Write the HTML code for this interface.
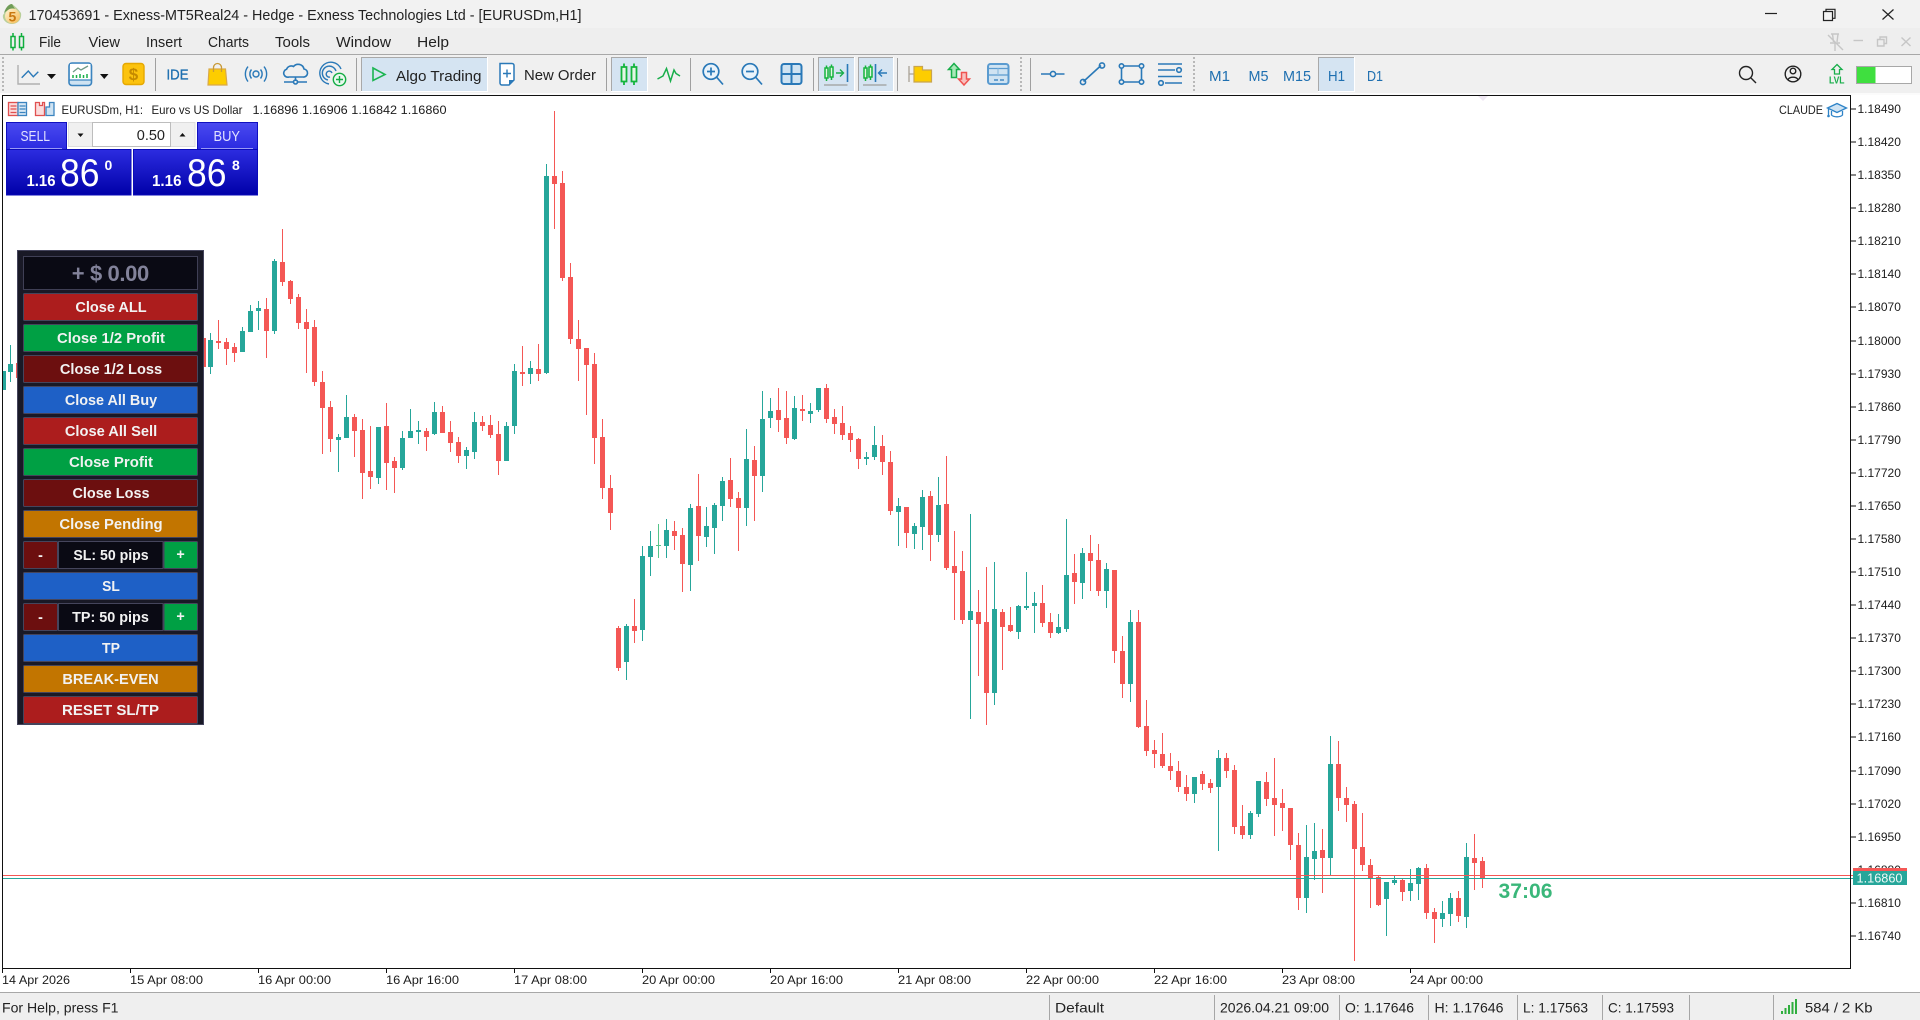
<!DOCTYPE html>
<html><head><meta charset="utf-8"><title>MT5</title>
<style>
html,body{margin:0;padding:0;background:#fff;width:1920px;height:1020px;overflow:hidden}
svg{display:block}
text{font-family:"Liberation Sans",sans-serif;fill:#1c1c1c}
.p{font-size:12px}
.t{font-size:12px}
.m{font-size:15px;fill:#222}
.s{font-size:14px;fill:#222}
.b{font-size:14.3px;font-weight:bold;fill:#f2f2f2;text-anchor:middle}
.tf{font-size:15px;fill:#1e6fb0}
.ic{fill:none;stroke:#2a79b8;stroke-width:1.6}
.T{stroke:#26a69a;fill:none}
.R{stroke:#f45755;fill:none}
</style></head><body>
<svg width="1920" height="1020" viewBox="0 0 1920 1020" xmlns="http://www.w3.org/2000/svg">
<defs>
<linearGradient id="gs" x1="0" y1="0" x2="0" y2="1"><stop offset="0" stop-color="#4a4af0"/><stop offset="1" stop-color="#2a2ae0"/></linearGradient>
<linearGradient id="gb" x1="0" y1="0" x2="0" y2="1"><stop offset="0" stop-color="#2c2ce0"/><stop offset="1" stop-color="#0000a8"/></linearGradient>
<linearGradient id="gl" x1="0" y1="0" x2="1" y2="1"><stop offset="0" stop-color="#fff6d8"/><stop offset="1" stop-color="#f4b850"/></linearGradient>
</defs>
<rect width="1920" height="1020" fill="#fff"/>
<!-- title bar -->
<rect width="1920" height="28" fill="#f2f2f2"/>
<rect y="28" width="1920" height="26" fill="#eeeeee"/>
<rect y="54" width="1920" height="1" fill="#a8a8a8"/>
<rect y="55" width="1920" height="38" fill="#f0f0f0"/>
<rect y="93" width="1920" height="2" fill="#fbfbfb"/>
<!-- logo -->
<path d="M5 12C6 7 9 4 12 4C15 6 18 9 21 13C22 19 18 24 12 24C6 24 2 19 3 15Z" fill="#b9cf9a"/>
<path d="M4 13C6 6 10 4 12 4L15 9C11 9 7 10 4 13Z" fill="#6f9c58"/>
<circle cx="12.500" cy="16" r="7.500" fill="url(#gl)"/>
<text x="8.500" y="21.500" style="font-size:14px;font-weight:bold;fill:#c9780f">5</text>
<text x="28.500" y="20" style="font-size:15px;fill:#222" textLength="553" lengthAdjust="spacingAndGlyphs">170453691 - Exness-MT5Real24 - Hedge - Exness Technologies Ltd - [EURUSDm,H1]</text>
<!-- window controls -->
<path d="M1765 13.500H1777" stroke="#222" stroke-width="1.200"/>
<path d="M1823.500 11.500h9v9h-9zM1826 11.500v-2.200h9v9h-2.400" fill="none" stroke="#222" stroke-width="1.200"/>
<path d="M1882.500 9.500L1893.500 19.500M1893.500 9.500L1882.500 19.500" stroke="#222" stroke-width="1.200"/>
<!-- menu -->
<g fill="none" stroke="#0fae3c" stroke-width="1.500"><path d="M11 36.500h4v11h-4zM13 33v3.500M13 47.500v3M19.500 36.500h4v11h-4zM21.500 33v3.500M21.500 47.500v3"/></g>
<text class="m" x="39" y="47" textLength="22" lengthAdjust="spacingAndGlyphs">File</text>
<text class="m" x="88.500" y="47" textLength="31.500" lengthAdjust="spacingAndGlyphs">View</text>
<text class="m" x="146" y="47" textLength="36" lengthAdjust="spacingAndGlyphs">Insert</text>
<text class="m" x="208" y="47" textLength="41" lengthAdjust="spacingAndGlyphs">Charts</text>
<text class="m" x="275" y="47" textLength="35" lengthAdjust="spacingAndGlyphs">Tools</text>
<text class="m" x="336" y="47" textLength="55" lengthAdjust="spacingAndGlyphs">Window</text>
<text class="m" x="417" y="47" textLength="32" lengthAdjust="spacingAndGlyphs">Help</text>
<g fill="none" stroke="#c6c6c6" stroke-width="1.400">
<path d="M1831 34h8M1832.500 34l1 8M1838 34l-1 8M1830 43h10M1835 43v8M1828 35l15 15"/>
<path d="M1853.500 40.500h9.500"/>
<path d="M1877.500 39.500h6.500v6.500h-6.500zM1880 39.500v-2.500h6.500v6.500h-2.500"/>
<path d="M1901.500 37.500l9 8.500M1910.500 37.500l-9 8.500"/>
</g>
<!-- toolbar grippers & seps -->
<g fill="#b8b8b8"><path d="M2 57h2v2h-2zM2 61h2v2h-2zM2 65h2v2h-2zM2 69h2v2h-2zM2 73h2v2h-2zM2 77h2v2h-2zM2 81h2v2h-2zM2 85h2v2h-2zM2 89h2v2h-2z"/>
<path d="M1020 57h2v2h-2zM1020 61h2v2h-2zM1020 65h2v2h-2zM1020 69h2v2h-2zM1020 73h2v2h-2zM1020 77h2v2h-2zM1020 81h2v2h-2zM1020 85h2v2h-2zM1020 89h2v2h-2z"/>
<path d="M1193 57h2v2h-2zM1193 61h2v2h-2zM1193 65h2v2h-2zM1193 69h2v2h-2zM1193 73h2v2h-2zM1193 77h2v2h-2zM1193 81h2v2h-2zM1193 85h2v2h-2zM1193 89h2v2h-2z"/></g>
<g fill="#a0a0a0"><rect x="155" y="58" width="1" height="33"/><rect x="356" y="58" width="1" height="33"/><rect x="606" y="58" width="1" height="33"/><rect x="690" y="58" width="1" height="33"/><rect x="813" y="58" width="1" height="33"/><rect x="897" y="58" width="1" height="33"/><rect x="1030" y="58" width="1" height="33"/></g>
<!-- toggled buttons -->
<g fill="#d5e4f2"><rect x="361" y="57" width="126" height="34"/><rect x="611" y="57" width="36" height="34"/><rect x="818" y="57" width="36" height="34"/><rect x="858" y="57" width="35" height="34"/><rect x="1318" y="57" width="36" height="34"/></g>
<g fill="none" stroke="#a9a9a9"><path d="M361.500 91V57.500H487M611.500 91V57.500H647M818.500 91V57.500H854M858.500 91V57.500H893M1318.500 91V57.500H1354"/></g>
<g fill="none" stroke="#fff"><path d="M361 91.500H487.500V57M611 91.500H647.500V57M818 91.500H854.500V57M858 91.500H893.500V57M1318 91.500H1354.500V57"/></g>
<!-- icon 1 -->
<path d="M18 65V84H40" fill="none" stroke="#b0b0b0" stroke-width="1.400"/>
<path d="M21.700 77.700L28.300 71L33.300 76.700L38.300 71.700" class="ic" style="stroke-width:1.400"/>
<path d="M47 74h9l-4.500 5z" fill="#111"/>
<!-- icon 2 -->
<rect x="69" y="63" width="22.500" height="22.500" rx="3" fill="#cfe3f2" stroke="#3b84bf" stroke-width="1.600"/>
<rect x="70" y="64" width="20.500" height="15.500" fill="#fff"/>
<path d="M69 80h22.500" stroke="#3b84bf" stroke-width="1.300"/>
<path d="M73 72L78 68L81 70L88 66" fill="none" stroke="#6f9a86" stroke-width="1.300"/>
<path d="M73 78v-3M76.500 78v-3M80 78v-4M83.500 78v-3M87 78v-4" stroke="#19ae48" stroke-width="1.500"/>
<path d="M100 74h8.500l-4.250 5z" fill="#111"/>
<!-- dollar -->
<rect x="123" y="63.500" width="21" height="21" rx="3" fill="#fcc30e" stroke="#e6a800" stroke-width="1.400"/>
<text x="133.500" y="80" style="font-size:17px;font-weight:bold;fill:#c58a00;text-anchor:middle">$</text>
<text class="tf" x="166.500" y="79.500" style="font-size:15px;stroke:#1e6fb0;stroke-width:.35" textLength="22" lengthAdjust="spacingAndGlyphs">IDE</text>
<!-- bag -->
<path d="M209 69h16.500l1.500 16h-19z" fill="#fdcd00" stroke="#d9a94a" stroke-width="1.200"/>
<path d="M213.500 72v-4.500a4 4 0 0 1 8 0V72" fill="none" stroke="#c89a38" stroke-width="1.300"/>
<!-- signal -->
<g class="ic" style="stroke-width:1.400"><circle cx="256" cy="74" r="3"/><path d="M251.500 69.500a7 7 0 0 0 0 9M260.500 69.500a7 7 0 0 1 0 9M248 66.500a12 12 0 0 0 0 15M264 66.500a12 12 0 0 1 0 15"/></g>
<!-- cloud -->
<path d="M289 77h14a4 4 0 0 0 1-8 6 6 0 0 0-10.500-2.500 5 5 0 0 0-7 2.800A4 4 0 0 0 289 77Z" class="ic" fill="#eaf3fa"/>
<path d="M295.500 77v4M284 82h9M298 82h9" class="ic"/><circle cx="295.500" cy="82" r="2" class="ic"/>
<!-- globe plus -->
<g class="ic" style="stroke-width:1.400"><path d="M341 69a11 11 0 1 0-12 15M336 71a7 7 0 1 0-8 9M332 73a3 3 0 1 0-2 4"/></g>
<circle cx="339.500" cy="79.500" r="6.200" fill="#e9f8ee" stroke="#15ad45" stroke-width="1.400"/>
<path d="M339.500 76v7M336 79.500h7" stroke="#15ad45" stroke-width="1.400"/>
<!-- algo -->
<path d="M373 68L385 74.500L373 80.500Z" fill="none" stroke="#1cb552" stroke-width="1.600"/>
<text x="396" y="81" style="font-size:15px;fill:#222" textLength="85.500" lengthAdjust="spacingAndGlyphs">Algo Trading</text>
<!-- new order -->
<path d="M500 63.500h12a2 2 0 0 1 2 2V80l-5 5h-7a2 2 0 0 1-2-2z" fill="#fff" stroke="#2a79b8" stroke-width="1.500"/>
<path d="M509 85l5-5h-5z" fill="#2a79b8"/>
<path d="M507 69.500v8M503 73.500h8" stroke="#2a79b8" stroke-width="1.400"/>
<text x="524" y="80" style="font-size:15px;fill:#222" textLength="72" lengthAdjust="spacingAndGlyphs">New Order</text>
<!-- candles icon -->
<g fill="#e4f6e4" stroke="#14b43c" stroke-width="1.800"><path d="M621.500 67h5v14.500h-5zM631.500 67h5v14.500h-5z"/><path d="M624 63.500V67M624 81.500v3.500M634 63.500V67M634 81.500v3.500" fill="none"/></g>
<!-- zigzag -->
<path d="M657.500 79L663 76L666.500 68.500L670.500 81L674 70L676 73.500L680 76" fill="none" stroke="#18ae4a" stroke-width="1.500"/>
<!-- zoom -->
<g class="ic" style="stroke-width:1.700"><circle cx="711" cy="71.500" r="7.800" fill="#eaf3fa"/><path d="M716.500 77L723 84.500M707 71.500h8M711 67.500v8"/>
<circle cx="750" cy="71.500" r="7.800" fill="#eaf3fa"/><path d="M755.500 77L762 84.500M746 71.500h8"/></g>
<g stroke="#2a79b8" stroke-width="2"><rect x="781.500" y="64" width="20" height="20" rx="2.500" fill="#cfe3f2"/><path d="M791.500 64v20M781.500 74h20" fill="none"/></g>
<!-- shift buttons -->
<g fill="#e4f6e4" stroke="#14b43c" stroke-width="1.500"><path d="M825 68h3v10h-3zM830 67h3v10h-3z"/><path d="M826.500 65.500V68M826.500 78v3M831.500 64.500V67M831.500 77v3" fill="none"/></g>
<path d="M836 73h7.500M840 69.500l3.500 3.500-3.500 3.500" fill="none" stroke="#18ae4a" stroke-width="1.400"/>
<path d="M847.500 64v18" stroke="#2a79b8" stroke-width="1.600"/>
<path d="M824 85h23.500" stroke="#9d9d9d" stroke-width="1.300"/>
<g fill="#e4f6e4" stroke="#14b43c" stroke-width="1.500"><path d="M864 68h3v10h-3zM869 67h3v10h-3z"/><path d="M865.500 65.500V68M865.500 78v3M870.500 64.500V67M870.500 77v3" fill="none"/></g>
<path d="M875.500 64v18" stroke="#2a79b8" stroke-width="1.600"/>
<path d="M887 73h-8M882 69.500l-3.500 3.500 3.500 3.500" fill="none" stroke="#2a79b8" stroke-width="1.400"/>
<path d="M863 85h23.500" stroke="#9d9d9d" stroke-width="1.300"/>
<!-- folder -->
<path d="M909 66v16M909 74h5" stroke="#aaa296" stroke-width="1.300" fill="none"/>
<path d="M914 66.500h8.500v3.500h9v12H914z" fill="#fdcd00" stroke="#c9a54d" stroke-width="1.200"/>
<!-- arrows -->
<path d="M954 63.500l5.500 6h-3v8h-5v-8h-3z" fill="#a9e8b8" stroke="#18ae4a" stroke-width="1.500"/>
<path d="M964 85l5.500-6h-3v-6.500h-5V79h-3z" fill="#f8c0be" stroke="#ef5350" stroke-width="1.500"/>
<!-- window icon -->
<rect x="988" y="64" width="20.500" height="20" rx="2.500" fill="#cfe3f2" stroke="#5a9bd0" stroke-width="2"/>
<path d="M988 68.500h20.500M988 75h20.500" stroke="#5a9bd0" stroke-width="1.300"/><path d="M998 68.500V75" stroke="#8fbde0" stroke-width="1.200"/>
<path d="M994 80h4M1000 80h4" stroke="#2a79b8" stroke-width="1.200"/>
<!-- tools -->
<g class="ic"><path d="M1041 74h9M1056 74h8.500"/><circle cx="1053" cy="74" r="2.600"/>
<path d="M1083.500 81.500L1101 65.500"/><circle cx="1083" cy="82" r="2.600"/><circle cx="1102" cy="65.500" r="2.600"/>
<path d="M1123 66h16M1141.500 68v12M1123 82h16M1121.500 68v12"/><circle cx="1121.500" cy="66" r="2.200"/><circle cx="1141.500" cy="66" r="2.200"/><circle cx="1121.500" cy="82" r="2.200"/><circle cx="1141.500" cy="82" r="2.200"/>
<path d="M1158 64h24M1158 70h17M1165 83h17M1158 76.500h24" style="stroke-width:1.400"/><circle cx="1179" cy="70" r="2.300"/><circle cx="1161" cy="83" r="2.300"/></g>
<text class="tf" x="1209" y="81" textLength="21" lengthAdjust="spacingAndGlyphs">M1</text>
<text class="tf" x="1248.500" y="81" textLength="20" lengthAdjust="spacingAndGlyphs">M5</text>
<text class="tf" x="1283" y="81" textLength="28" lengthAdjust="spacingAndGlyphs">M15</text>
<text class="tf" x="1328" y="81" textLength="17" lengthAdjust="spacingAndGlyphs">H1</text>
<text class="tf" x="1367" y="81" textLength="16" lengthAdjust="spacingAndGlyphs">D1</text>
<!-- search account lvl -->
<circle cx="1746" cy="73" r="6.500" fill="none" stroke="#222" stroke-width="1.400"/><path d="M1751 78L1756 83" stroke="#222" stroke-width="1.400"/>
<circle cx="1793" cy="74" r="7.800" fill="none" stroke="#222" stroke-width="1.400"/><circle cx="1793" cy="71" r="2.800" fill="none" stroke="#222" stroke-width="1.400"/><path d="M1788 79.500a5.500 4 0 0 1 10 0" fill="none" stroke="#222" stroke-width="1.400"/>
<path d="M1837 64.500l5 5h-2.500v4.500h-5v-4.500H1832z" fill="none" stroke="#18ae4a" stroke-width="1.300"/>
<text x="1829" y="83.500" style="font-size:10.500px;font-weight:bold;fill:#18ae4a" textLength="15.500" lengthAdjust="spacingAndGlyphs">LVL</text>
<rect x="1856.500" y="66.500" width="55" height="17" fill="#fff" stroke="#a8a8a8"/><rect x="1857" y="67" width="18.500" height="16" fill="#3fdf3f"/>
<!-- candles -->
<g shape-rendering="crispEdges">
<g transform="translate(0 100) scale(1 .33333)">
<path class="T" stroke-width="1" d="M210.500 699V822M242.500 681V756M250.500 615V696M258.500 603V690M274.500 477V702M338.500 1002V1116M346.500 885V1014M378.500 981V1152M402.500 993V1110M410.500 927V1014M418.500 963V1032M434.500 906V1005M466.500 1041V1107M474.500 936V1077M506.500 966V1083M514.500 792V1002M530.500 783V852M546.500 192V822"/>
<path class="T" stroke-width="5" d="M210.500 720V801M242.500 693V756M250.500 633V696M258.500 624V633M274.500 483V693M338.500 1011V1020M346.500 951V1014M378.500 981V1134M402.500 1014V1104M410.500 993V1014M418.500 990V996M434.500 936V1002M466.500 1050V1068M474.500 966V1056M506.500 978V1083M514.500 813V978M530.500 804V822M546.500 228V819"/>
<path class="R" stroke-width="1" d="M218.500 660V747M226.500 714V795M234.500 729V786M266.500 594V774M282.500 387V558M290.500 540V612M298.500 582V687M306.500 627V819M314.500 660V858M322.500 813V1062M330.500 903V1056M354.500 942V1071M362.500 957V1197M370.500 978V1167M386.500 909V1170M394.500 1071V1179M426.500 984V1053M442.500 918V999M450.500 963V1056M458.500 1011V1089M482.500 948V993M490.500 945V1014M498.500 963V1125M522.500 738V858M538.500 732V843M554.500 33V387M562.500 213V543M570.500 489V732M578.500 660V843M586.500 744V945M594.500 759V1092"/>
<path class="R" stroke-width="5" d="M218.500 723V729M226.500 726V747M234.500 741V759M266.500 627V693M282.500 486V546M290.500 543V597M298.500 591V669M306.500 666V687M314.500 681V846M322.500 846V924M330.500 921V1017M354.500 951V993M362.500 990V1119M370.500 1113V1131M386.500 978V1089M394.500 1083V1104M426.500 993V1011M442.500 936V999M450.500 996V1029M458.500 1026V1068M482.500 966V978M490.500 975V1005M498.500 1002V1083M522.500 816V822M538.500 807V822M554.500 228V252M562.500 249V534M570.500 531V717M578.500 717V747M586.500 744V795M594.500 792V1014"/>
</g>
<g transform="translate(0 370) scale(1 .33333)">
<path class="T" stroke-width="1" d="M626.500 762V930M642.500 528V813M650.500 483V618M666.500 447V564M690.500 402V663M706.500 411V531M714.500 399V552M722.500 321V453M746.500 177V468M762.500 63V366M770.500 84V174M794.500 78V210M810.500 99V159M818.500 54V126M866.500 246V285M874.500 168V270M898.500 384V528M914.500 459V537M922.500 360V540M938.500 321V516M970.500 432V1047M994.500 576V1005"/>
<path class="T" stroke-width="5" d="M626.500 768V876M642.500 558V780M650.500 528V561M666.500 480V528M690.500 414V585M706.500 468V501M714.500 405V474M722.500 333V408M746.500 267V414M762.500 147V318M770.500 123V144M794.500 114V207M810.500 123V132M818.500 54V120M866.500 261V267M874.500 225V261M898.500 408V426M914.500 468V492M922.500 381V471M938.500 405V495M970.500 723V750M994.500 717V969"/>
<path class="R" stroke-width="1" d="M602.500 147V387M610.500 315V480M618.500 768V903M634.500 687V819M674.500 453V540M682.500 474V666M698.500 312V573M730.500 264V411M738.500 366V543M754.500 228V453M778.500 54V186M786.500 63V222M802.500 75V153M826.500 42V159M834.500 117V192M842.500 108V210M850.500 168V246M858.500 204V297M882.500 195V315M890.500 243V435M906.500 411V534M930.500 363V573M946.500 258V600M954.500 483V750M962.500 543V762M978.500 660V918M986.500 591V1065"/>
<path class="R" stroke-width="5" d="M602.500 201V354M610.500 354V429M618.500 774V894M634.500 768V783M674.500 483V498M682.500 495V582M698.500 408V498M730.500 330V387M738.500 384V414M754.500 270V318M778.500 120V150M786.500 144V204M802.500 117V123M826.500 54V147M834.500 141V162M842.500 159V195M850.500 189V210M858.500 207V267M882.500 228V276M890.500 276V423M906.500 411V489M930.500 378V495M946.500 402V594M954.500 588V609M962.500 603V750M978.500 726V762M986.500 756V969"/>
<path d="M658.500 462V564" stroke="#54c48a" stroke-width="1" fill="none"/><path d="M656 526H661" stroke="#54c48a" stroke-width="3" fill="none"/>
</g>
<g transform="translate(0 500) scale(1 .33333)">
<path class="R" stroke-width="1" d="M1002.500 327V510M1010.500 321V396M1042.500 255V381M1050.500 339V414M1074.500 162V312M1090.500 105V273M1098.500 132V288M1114.500 210V489M1122.500 408V594M1138.500 330V684M1146.500 600V768M1154.500 720V804M1162.500 699V804M1170.500 759V840M1178.500 783V876M1186.500 825V903M1202.500 813V870M1210.500 837V879M1226.500 759V834M1234.500 795V1002M1242.500 915V1017M1266.500 816V918M1274.500 774V1008M1282.500 867V993M1290.500 924V1080M1298.500 999V1230M1322.500 987V1179M1338.500 723V933M1346.500 861V966M1354.500 903V1383M1362.500 939V1113M1370.500 1077V1224M1378.500 1128V1218M1402.500 1137V1203M1426.500 1092V1257M1434.500 1224V1329M1458.500 1173V1266M1474.500 1002V1170M1482.500 1071V1164"/>
<path class="R" stroke-width="5" d="M1002.500 336V381M1010.500 375V393M1042.500 309V369M1050.500 366V399M1074.500 219V246M1090.500 159V183M1098.500 180V273M1114.500 210V453M1122.500 453V552M1138.500 366V681M1146.500 678V753M1154.500 750V762M1162.500 762V798M1170.500 798V813M1178.500 813V861M1186.500 861V882M1202.500 822V852M1210.500 849V864M1226.500 774V813M1234.500 810V981M1242.500 978V1005M1266.500 846V897M1274.500 894V915M1282.500 909V924M1290.500 924V1035M1298.500 1035V1194M1322.500 1050V1074M1338.500 792V894M1346.500 894V915M1354.500 912V1047M1362.500 1041V1095M1370.500 1095V1134M1378.500 1131V1215M1402.500 1140V1176M1426.500 1104V1239M1434.500 1236V1257M1458.500 1194V1248M1474.500 1074V1089M1482.500 1083V1137"/>
<path class="T" stroke-width="1" d="M1018.500 315V417M1026.500 216V330M1034.500 276V399M1058.500 342V402M1066.500 57V396M1082.500 144V297M1106.500 189V324M1130.500 330V606M1194.500 831V909M1218.500 750V1053M1250.500 933V1017M1258.500 843V951M1306.500 975V1239M1314.500 969V1140M1330.500 708V1126M1386.500 1146V1308M1394.500 1128V1155M1410.500 1107V1203M1418.500 1101V1200M1442.500 1203V1281M1450.500 1179V1278M1466.500 1029V1284"/>
<path class="T" stroke-width="5" d="M1018.500 318V396M1026.500 318V324M1034.500 309V318M1058.500 381V399M1066.500 225V387M1082.500 159V249M1106.500 207V273M1130.500 366V552M1194.500 831V882M1218.500 774V861M1250.500 939V1005M1258.500 843V942M1306.500 1071V1194M1314.500 1053V1077M1330.500 792V1074M1386.500 1146V1197M1394.500 1140V1149M1410.500 1149V1173M1418.500 1104V1152M1442.500 1239V1257M1450.500 1194V1242M1466.500 1071V1251"/>
</g>
<rect x="3" y="371" width="3" height="19" fill="#26a69a"/>
<rect x="10" y="345" width="1" height="37" fill="#26a69a"/><rect x="8" y="364" width="5" height="8" fill="#26a69a"/>
<rect x="16" y="363" width="2" height="15" fill="#f45755"/>
<rect x="203" y="338" width="3" height="29" fill="#f45755"/>
<!-- bid/ask -->
<rect x="3" y="875" width="1850" height="1" fill="#f45755"/>
<rect x="3" y="878" width="1850" height="1" fill="#26a69a"/>
</g>
<!-- chart frame -->
<rect x="2" y="95" width="1849" height="1" fill="#111"/>
<rect x="2" y="95" width="1" height="874" fill="#111"/>
<rect x="1850" y="95" width="1" height="874" fill="#111"/>
<rect x="2" y="968" width="1849" height="1" fill="#111"/>
<path d="M1478 96h10l-5 5z" fill="#efe8f3"/>
<!-- chart header -->
<g fill="none" stroke-width="1.300">
<rect x="8.500" y="102.500" width="9.500" height="13" stroke="#e05050" fill="#fbdcdc"/><rect x="18" y="102.500" width="8.500" height="13" stroke="#3b84bf" fill="#d8e8f5"/>
<path d="M10.500 106h6M10.500 109h6M10.500 112.500h6" stroke="#e05050"/><path d="M19.500 106h6M19.500 109h6M19.500 112.500h6" stroke="#3b84bf"/>
<path d="M35.500 102.500h4v3h3v-3h2v13h-9z" stroke="#e05050" fill="#fbdcdc"/><path d="M46 107h3.500v-4.500H54v13h-8z" stroke="#3b84bf" fill="#cfe3f2"/></g>
<text class="p" x="61.500" y="114" textLength="81.500" lengthAdjust="spacingAndGlyphs">EURUSDm, H1:</text>
<text class="p" x="151.500" y="114" textLength="91" lengthAdjust="spacingAndGlyphs">Euro vs US Dollar</text>
<text class="p" x="252.500" y="114" textLength="194" lengthAdjust="spacingAndGlyphs">1.16896 1.16906 1.16842 1.16860</text>
<text class="p" x="1779" y="114" textLength="44" lengthAdjust="spacingAndGlyphs">CLAUDE</text>
<path d="M1827.500 108L1837 103.500L1846.500 108L1837 112.500Z" fill="#cfe3f3" stroke="#2e83c7" stroke-width="1.300"/>
<path d="M1831.500 111v4a6 3 0 0 0 11 0v-4" fill="none" stroke="#2e83c7" stroke-width="1.300"/><path d="M1828.500 109v7" stroke="#2e83c7" stroke-width="1.300"/><circle cx="1828.500" cy="116" r="1.300" fill="#2e83c7"/>
<!-- one click -->
<rect x="6.500" y="122.500" width="60" height="27" fill="url(#gs)" stroke="#1010c0"/>
<rect x="197.500" y="122.500" width="60" height="27" fill="url(#gs)" stroke="#1010c0"/>
<rect x="6.500" y="149.500" width="124.500" height="45.500" fill="url(#gb)" stroke="#0a0ab8"/>
<rect x="133.500" y="149.500" width="124" height="45.500" fill="url(#gb)" stroke="#0a0ab8"/>
<path d="M10 148.500h52M201 148.500h52" stroke="#9a9af5"/>
<rect x="68.500" y="122.500" width="126.500" height="24" fill="#f0f0f0" stroke="#dcdcdc"/>
<rect x="92.500" y="122.500" width="78" height="24" fill="#fff" stroke="#bdbdbd"/>
<path d="M77.500 133.500h6l-3 3.500zM179.500 136.500h6l-3-3.500z" fill="#111"/>
<text x="165" y="140" style="font-size:14.500px;fill:#222;text-anchor:end">0.50</text>
<text x="20.500" y="141" style="font-size:15px;fill:#e2e2ff" textLength="29.500" lengthAdjust="spacingAndGlyphs">SELL</text>
<text x="213.500" y="141" style="font-size:15px;fill:#e2e2ff" textLength="26.500" lengthAdjust="spacingAndGlyphs">BUY</text>
<text x="26.500" y="186" style="font-size:15.500px;font-weight:bold;fill:#fff" textLength="29" lengthAdjust="spacingAndGlyphs">1.16</text>
<text x="60" y="186" style="font-size:39px;fill:#fff" textLength="39.500" lengthAdjust="spacingAndGlyphs">86</text>
<text x="104.500" y="170" style="font-size:14px;font-weight:bold;fill:#fff">0</text>
<text x="152" y="186" style="font-size:15.500px;font-weight:bold;fill:#fff" textLength="29.500" lengthAdjust="spacingAndGlyphs">1.16</text>
<text x="187" y="186" style="font-size:39px;fill:#fff" textLength="39.500" lengthAdjust="spacingAndGlyphs">86</text>
<text x="232" y="170" style="font-size:14px;font-weight:bold;fill:#fff">8</text>
<!-- trade panel -->
<rect x="17.500" y="250.500" width="186" height="474" fill="#191926" stroke="#44445c"/>
<rect x="23.500" y="256.500" width="174" height="33" fill="#0a0a14" stroke="#3f3f55"/>
<text x="110.500" y="281" style="font-size:22px;font-weight:bold;fill:#82829a;text-anchor:middle" textLength="77.500" lengthAdjust="spacing">+ $ 0.00</text>
<g stroke="#45455c">
<rect x="23.500" y="293.500" width="174" height="27" rx="1" fill="#ac1d1d"/>
<rect x="23.500" y="324.500" width="174" height="27" rx="1" fill="#00a044"/>
<rect x="23.500" y="355.500" width="174" height="27" rx="1" fill="#6c0f0f"/>
<rect x="23.500" y="386.500" width="174" height="27" rx="1" fill="#1e60c6"/>
<rect x="23.500" y="417.500" width="174" height="27" rx="1" fill="#ac1d1d"/>
<rect x="23.500" y="448.500" width="174" height="27" rx="1" fill="#00a044"/>
<rect x="23.500" y="479.500" width="174" height="27" rx="1" fill="#6c0f0f"/>
<rect x="23.500" y="510.500" width="174" height="27" rx="1" fill="#c27500"/>
<rect x="23.500" y="541.500" width="34" height="27" rx="1" fill="#6c0f0f"/>
<rect x="58.500" y="541.500" width="104.500" height="27" fill="#0a0a14"/>
<rect x="164" y="541.500" width="33.500" height="27" rx="1" fill="#00a044"/>
<rect x="23.500" y="572.500" width="174" height="27" rx="1" fill="#1e60c6"/>
<rect x="23.500" y="603.500" width="34" height="27" rx="1" fill="#6c0f0f"/>
<rect x="58.500" y="603.500" width="104.500" height="27" fill="#0a0a14"/>
<rect x="164" y="603.500" width="33.500" height="27" rx="1" fill="#00a044"/>
<rect x="23.500" y="634.500" width="174" height="27" rx="1" fill="#1e60c6"/>
<rect x="23.500" y="665.500" width="174" height="27" rx="1" fill="#c27500"/>
<rect x="23.500" y="696.500" width="174" height="27" rx="1" fill="#ac1d1d"/>
</g>
<text class="b" x="111" y="312" textLength="71.300" lengthAdjust="spacingAndGlyphs">Close ALL</text>
<text class="b" x="111" y="343" textLength="108" lengthAdjust="spacingAndGlyphs">Close 1/2 Profit</text>
<text class="b" x="111" y="374" textLength="102.300" lengthAdjust="spacingAndGlyphs">Close 1/2 Loss</text>
<text class="b" x="111" y="405" textLength="92.300" lengthAdjust="spacingAndGlyphs">Close All Buy</text>
<text class="b" x="111" y="436" textLength="92.300" lengthAdjust="spacingAndGlyphs">Close All Sell</text>
<text class="b" x="111" y="467" textLength="84" lengthAdjust="spacingAndGlyphs">Close Profit</text>
<text class="b" x="111" y="498" textLength="77" lengthAdjust="spacingAndGlyphs">Close Loss</text>
<text class="b" x="111" y="529" textLength="103.300" lengthAdjust="spacingAndGlyphs">Close Pending</text>
<text class="b" x="40.500" y="560">-</text>
<text class="b" x="111" y="560" textLength="75.300" lengthAdjust="spacingAndGlyphs">SL: 50 pips</text>
<text class="b" x="180.500" y="559">+</text>
<text class="b" x="111" y="591" textLength="17.700" lengthAdjust="spacingAndGlyphs">SL</text>
<text class="b" x="40.500" y="622">-</text>
<text class="b" x="110.500" y="622" textLength="76.700" lengthAdjust="spacingAndGlyphs">TP: 50 pips</text>
<text class="b" x="180.500" y="621">+</text>
<text class="b" x="111" y="653" textLength="18" lengthAdjust="spacingAndGlyphs">TP</text>
<text class="b" x="110.500" y="684" textLength="96.300" lengthAdjust="spacingAndGlyphs">BREAK-EVEN</text>
<text class="b" x="110.500" y="715" textLength="97" lengthAdjust="spacingAndGlyphs">RESET SL/TP</text>
<!-- price axis -->
<path d="M1851 109h5M1851 142h5M1851 175h5M1851 208h5M1851 241h5M1851 274h5M1851 307h5M1851 341h5M1851 374h5M1851 407h5M1851 440h5M1851 473h5M1851 506h5M1851 539h5M1851 572h5M1851 605h5M1851 638h5M1851 671h5M1851 704h5M1851 737h5M1851 771h5M1851 804h5M1851 837h5M1851 903h5M1851 936h5" stroke="#111" stroke-width="1" shape-rendering="crispEdges"/>
<text class="p" x="1857.500" y="113">1.18490</text><text class="p" x="1857.500" y="146">1.18420</text><text class="p" x="1857.500" y="179">1.18350</text><text class="p" x="1857.500" y="212">1.18280</text><text class="p" x="1857.500" y="245">1.18210</text><text class="p" x="1857.500" y="278">1.18140</text><text class="p" x="1857.500" y="311">1.18070</text><text class="p" x="1857.500" y="345">1.18000</text><text class="p" x="1857.500" y="378">1.17930</text><text class="p" x="1857.500" y="411">1.17860</text><text class="p" x="1857.500" y="444">1.17790</text><text class="p" x="1857.500" y="477">1.17720</text><text class="p" x="1857.500" y="510">1.17650</text><text class="p" x="1857.500" y="543">1.17580</text><text class="p" x="1857.500" y="576">1.17510</text><text class="p" x="1857.500" y="609">1.17440</text><text class="p" x="1857.500" y="642">1.17370</text><text class="p" x="1857.500" y="675">1.17300</text><text class="p" x="1857.500" y="708">1.17230</text><text class="p" x="1857.500" y="741">1.17160</text><text class="p" x="1857.500" y="775">1.17090</text><text class="p" x="1857.500" y="808">1.17020</text><text class="p" x="1857.500" y="841">1.16950</text><text class="p" x="1857.500" y="874">1.16880</text><text class="p" x="1857.500" y="907">1.16810</text><text class="p" x="1857.500" y="940">1.16740</text>
<rect x="1853" y="868" width="54" height="3.500" fill="#f45755"/>
<rect x="1853" y="871" width="54" height="14" fill="#26a69a"/>
<text x="1856.500" y="882.500" style="font-size:12.500px;fill:#eefaf8" textLength="46" lengthAdjust="spacingAndGlyphs">1.16860</text>
<text x="1498.500" y="898" style="font-size:21px;font-weight:bold;fill:#3ab77a" textLength="54" lengthAdjust="spacingAndGlyphs">37:06</text>
<!-- time axis -->
<path d="M130.500 969v4M258.500 969v4M386.500 969v4M514.500 969v4M642.500 969v4M770.500 969v4M898.500 969v4M1026.500 969v4M1154.500 969v4M1282.500 969v4M1410.500 969v4M2.500 969v4" stroke="#111" shape-rendering="crispEdges"/>
<text class="t" x="2" y="984" textLength="68" lengthAdjust="spacingAndGlyphs">14 Apr 2026</text>
<text class="t" x="130" y="984" textLength="73" lengthAdjust="spacingAndGlyphs">15 Apr 08:00</text>
<text class="t" x="258" y="984" textLength="73" lengthAdjust="spacingAndGlyphs">16 Apr 00:00</text>
<text class="t" x="386" y="984" textLength="73" lengthAdjust="spacingAndGlyphs">16 Apr 16:00</text>
<text class="t" x="514" y="984" textLength="73" lengthAdjust="spacingAndGlyphs">17 Apr 08:00</text>
<text class="t" x="642" y="984" textLength="73" lengthAdjust="spacingAndGlyphs">20 Apr 00:00</text>
<text class="t" x="770" y="984" textLength="73" lengthAdjust="spacingAndGlyphs">20 Apr 16:00</text>
<text class="t" x="898" y="984" textLength="73" lengthAdjust="spacingAndGlyphs">21 Apr 08:00</text>
<text class="t" x="1026" y="984" textLength="73" lengthAdjust="spacingAndGlyphs">22 Apr 00:00</text>
<text class="t" x="1154" y="984" textLength="73" lengthAdjust="spacingAndGlyphs">22 Apr 16:00</text>
<text class="t" x="1282" y="984" textLength="73" lengthAdjust="spacingAndGlyphs">23 Apr 08:00</text>
<text class="t" x="1410" y="984" textLength="73" lengthAdjust="spacingAndGlyphs">24 Apr 00:00</text>
<!-- status bar -->
<rect y="992" width="1920" height="28" fill="#efefef"/>
<rect y="992" width="1920" height="1" fill="#a8a8a8"/>
<path d="M1049.500 995v25M1214.500 995v25M1339.500 995v25M1428.500 995v25M1517.500 995v25M1602.500 995v25M1689.500 995v25M1773.500 995v25" stroke="#a6a6a6" shape-rendering="crispEdges"/>
<text class="s" x="2" y="1012.500" textLength="116.500" lengthAdjust="spacingAndGlyphs">For Help, press F1</text>
<text class="s" x="1055" y="1012.500" textLength="49" lengthAdjust="spacingAndGlyphs">Default</text>
<text class="s" x="1220" y="1012.500" textLength="109" lengthAdjust="spacingAndGlyphs">2026.04.21 09:00</text>
<text class="s" x="1345" y="1012.500" textLength="69" lengthAdjust="spacingAndGlyphs">O: 1.17646</text>
<text class="s" x="1434.500" y="1012.500" textLength="69" lengthAdjust="spacingAndGlyphs">H: 1.17646</text>
<text class="s" x="1523" y="1012.500" textLength="65" lengthAdjust="spacingAndGlyphs">L: 1.17563</text>
<text class="s" x="1608" y="1012.500" textLength="66" lengthAdjust="spacingAndGlyphs">C: 1.17593</text>
<path d="M1782 1014v-3M1785.500 1014v-6M1789 1014v-9M1792.500 1014v-12M1796 1014v-15" stroke="#2fae3e" stroke-width="2" shape-rendering="crispEdges"/>
<text class="s" x="1805" y="1012.500" textLength="67.500" lengthAdjust="spacingAndGlyphs">584 / 2 Kb</text>
</svg>
</body></html>
